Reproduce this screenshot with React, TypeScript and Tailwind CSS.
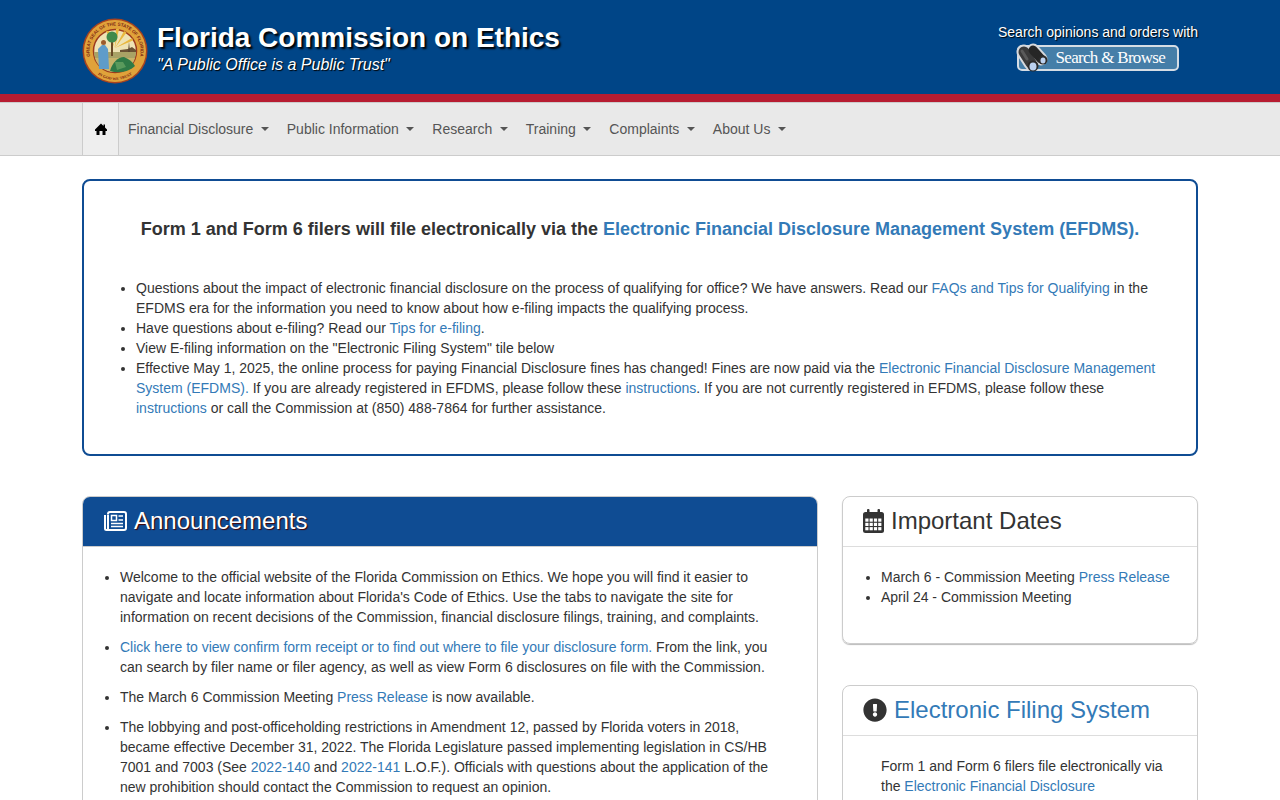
import { FaExclamationCircle } from "react-icons/fa";

const navItems = ["Financial Disclosure", "Public Information", "Research", "Training", "Complaints", "About Us"];

const Seal = () => (
  <svg width="66" height="66" viewBox="0 0 66 66" className="shrink-0">
    <defs>
      <path id="seal-top" d="M13 48.800A25.500 25.500 0 1 1 53 48.800" />
      <path id="seal-bottom" d="M16 56.500A29 29 0 0 0 50 56.500" />
    </defs>
    <circle cx="33" cy="33" r="32.500" fill="#a8431f" />
    <circle cx="33" cy="33" r="31" fill="#e0a23a" />
    <circle cx="33" cy="33" r="21.500" fill="#efe3b4" stroke="#9c3a1e" strokeWidth="1.500" />
    <path d="M33 30 24 13h3zM33 30 34 11h3zM33 30 42 13l2.500 1.500zM33 30 50 20l1 2.500z" fill="#e9b83f" />
    <path d="M12 34h42a21 21 0 0 1-1 6H13a21 21 0 0 1-1-6z" fill="#a9a265" />
    <path d="M13 40h40c-2 8-10 14-20 14s-18-6-20-14z" fill="#c9b46a" />
    <path d="M28 53c2-8 8-14 14-14 5 2 9 5 11 9-5 5-15 8-25 5z" fill="#2f7a46" />
    <path d="M33 44h8l3 5-9 3z" fill="#5a9a5c" />
    <path d="M16 31l4-4h3l3 4 1 20h-10z" fill="#5f9cc9" />
    <circle cx="21.500" cy="24.500" r="2.500" fill="#9c5b2b" />
    <rect x="29" y="20" width="2" height="18" fill="#6a4a25" />
    <circle cx="30" cy="19" r="5.500" fill="#3f8a4b" />
    <path d="M38 34h16v-2l-4-3-4 2-8 1z" fill="#6a5234" />
    <path d="M47 24l1 10h-2z" fill="#5a4630" />
    <text fontFamily="Liberation Sans, sans-serif" fontSize="4.500" fontWeight="700" fill="#7c2412">
      <textPath href="#seal-top" startOffset="50%" textAnchor="middle">
        GREAT SEAL OF THE STATE OF FLORIDA
      </textPath>
    </text>
    <text fontFamily="Liberation Serif, serif" fontSize="4" fontWeight="700" fill="#7c2412">
      <textPath href="#seal-bottom" startOffset="50%" textAnchor="middle">
        IN GOD WE TRUST
      </textPath>
    </text>
  </svg>
);

const Binoculars = () => (
  <svg width="34" height="32" viewBox="0 0 34 32" className="absolute -left-[3px] -top-[5px]">
    <g fill="none" strokeLinecap="round">
      <path d="M8 10 15 21" stroke="#d6d9dd" strokeWidth="15" />
      <path d="M17 8 25 17" stroke="#d6d9dd" strokeWidth="13" />
      <path d="M8 10 15 21" stroke="#3a3a3a" strokeWidth="11" />
      <path d="M17 8 25 17" stroke="#262626" strokeWidth="9" />
      <path d="M6 9 11 17" stroke="#5a5a5a" strokeWidth="3" />
    </g>
    <circle cx="17" cy="24" r="5.500" fill="#2b2b2b" />
    <ellipse cx="17" cy="24.500" rx="3.500" ry="4" fill="#bcd2f0" />
    <circle cx="27" cy="18" r="4.500" fill="#2b2b2b" />
    <ellipse cx="27" cy="18.500" rx="2.500" ry="3" fill="#bcd2f0" />
  </svg>
);

const HomeIcon = () => (
  <svg width="12" height="12" viewBox="0 0 12 12" fill="#000">
    <path d="M6 .5 8.500 3V1.500H10V4.500L12 6.500V8H10.500V12H7.500V8H4.500V12H1.500V8H0V6.500z" />
  </svg>
);

const NewspaperIcon = () => (
  <svg width="24" height="20" viewBox="0 0 24 20" fill="none" stroke="#fff" strokeWidth="2" className="shrink-0">
    <path d="M5 3.500V17.500a1.500 1.500 0 0 1-3 0V4M5 3a2 2 0 0 1 2-2h14a2 2 0 0 1 2 2v14a2 2 0 0 1-2 2H3.500" />
    <rect x="8.500" y="4.500" width="5" height="5" strokeWidth="1.500" />
    <path d="M15.500 5H20M15.500 9H20M8 12.500H20M8 15.500H20" strokeWidth="1.500" />
  </svg>
);

const CalendarIcon = () => (
  <svg width="21" height="24" viewBox="0 0 21 24" className="shrink-0">
    <rect x="0" y="3" width="21" height="21" rx="2.500" fill="#333" />
    <rect x="4" y="0" width="2.500" height="5" rx="1" fill="#333" />
    <rect x="14.500" y="0" width="2.500" height="5" rx="1" fill="#333" />
    {[0, 1, 2, 3].map((col) =>
      [0, 1, 2].map((row) => (
        <rect key={`${col}-${row}`} x={2.300 + col * 4.300} y={9.500 + row * 4.300} width="3.200" height="3.200" fill="#fff" />
      )),
    )}
  </svg>
);

const A = ({ children }: { children: React.ReactNode }) => (
  <a href="#" className="text-[#337ab7]">
    {children}
  </a>
);

export default function App() {
  return (
    <div className="h-screen overflow-hidden bg-white font-['Liberation_Sans',Arial,sans-serif] text-[14px] leading-[20px] text-[#333]">
      <header className="flex h-[94px] items-start justify-between bg-[#004587] px-[82px] pt-[18px] text-white">
        <div className="flex gap-[9px]">
          <Seal />
          <div>
            <h1 className="mt-[2px] text-[28px] font-bold leading-[36px] [text-shadow:2px_2px_2px_#000]">
              Florida Commission on Ethics
            </h1>
            <p className="-mt-[1px] text-[16px] italic leading-[20px] [text-shadow:1px_1px_1px_#000]">
              "A Public Office is a Public Trust"
            </p>
          </div>
        </div>
        <div className="flex flex-col items-center pt-[4px]">
          <p className="[text-shadow:1px_1px_1px_#000]">Search opinions and orders with</p>
          <div className="relative mt-[3px] flex h-[26px] w-[162px] items-center justify-end rounded-[5px] border-2 border-[#d5dde5] bg-[#457ea8] pr-[12px] font-['Liberation_Serif',serif] text-[17px] tracking-[-0.7px] text-white">
            <Binoculars />
            Search &amp; Browse
          </div>
        </div>
      </header>
      <div className="h-[8px] bg-[#b71c31]" />
      <nav className="flex h-[54px] border-b border-t border-[#ccc] bg-[#e9e9e9] pl-[82px]">
        <div className="flex w-[37px] items-center justify-center border-x border-[#ccc] bg-[#eee]">
          <HomeIcon />
        </div>
        <ul className="flex items-center text-[#555]">
          {navItems.map((item) => (
            <li key={item} className="flex items-center gap-[7.500px] px-[9px]">
              {item}
              <span className="h-0 w-0 border-x-4 border-t-4 border-x-transparent border-t-[#555]" />
            </li>
          ))}
        </ul>
      </nav>

      <main className="mx-[82px] pt-[23px]">
        <section className="h-[277px] rounded-[8px] border-2 border-[#0f4c93] pl-[12px] pr-[32px] pt-[35px]">
          <h2 className="ml-[20px] text-center text-[18px] font-bold leading-[26px]">
            Form 1 and Form 6 filers will file electronically via the{" "}
            <A>Electronic Financial Disclosure Management System (EFDMS).</A>
          </h2>
          <ul className="mt-[36px] list-disc pl-[40px]">
            <li>
              Questions about the impact of electronic financial disclosure on the process of qualifying for office? We
              have answers. Read our <A>FAQs and Tips for Qualifying</A> in the EFDMS era for the information you need to
              know about how e-filing impacts the qualifying process.
            </li>
            <li>
              Have questions about e-filing? Read our <A>Tips for e-filing</A>.
            </li>
            <li>View E-filing information on the "Electronic Filing System" tile below</li>
            <li>
              Effective May 1, 2025, the online process for paying Financial Disclosure fines has changed! Fines are now
              paid via the <A>Electronic Financial Disclosure Management System (EFDMS).</A> If you are already registered
              in EFDMS, please follow these <A>instructions</A>. If you are not currently registered in EFDMS, please
              follow these <A>instructions</A> or call the Commission at (850) 488-7864 for further assistance.
            </li>
          </ul>
        </section>

        <div className="mt-[40px] grid grid-cols-[736px_356px] gap-x-[24px]">
          <section className="overflow-hidden rounded-t-[8px] border border-[#ccc]">
            <h2 className="flex h-[50px] items-center gap-[7px] border-b border-[#ccc] bg-[#0f4c93] px-[20px] pb-[2px] text-[24px] text-white [text-shadow:1px_1px_1px_#400]">
              <NewspaperIcon />
              Announcements
            </h2>
            <ul className="list-disc py-[20px] pl-[37px] pr-[40px]">
              <li className="mb-[10px]">
                Welcome to the official website of the Florida Commission on Ethics. We hope you will find it easier to
                navigate and locate information about Florida's Code of Ethics. Use the tabs to navigate the site for
                information on recent decisions of the Commission, financial disclosure filings, training, and complaints.
              </li>
              <li className="mb-[2px]">
                <A>Click here to view confirm form receipt or to find out where to file your disclosure form.</A> From the
                link, you can search by filer name or filer agency, as well as view Form 6 disclosures on file with the
                Commission.
              </li>
              <li className="mb-[10px] mt-[10px]">
                The March 6 Commission Meeting <A>Press Release</A> is now available.
              </li>
              <li>
                The lobbying and post-officeholding restrictions in Amendment 12, passed by Florida voters in 2018, became
                effective December 31, 2022. The Florida Legislature passed implementing legislation in CS/HB 7001 and 7003
                (See <A>2022-140</A> and <A>2022-141</A> L.O.F.). Officials with questions about the application of the new
                prohibition should contact the Commission to request an opinion.
              </li>
            </ul>
          </section>

          <div className="flex flex-col gap-[41px]">
            <section className="h-[148px] rounded-[8px] border border-[#ccc] shadow-[0_1px_1px_#bbb]">
              <h2 className="flex h-[50px] items-center gap-[7px] border-b border-[#ddd] px-[20px] pb-[2px] text-[24px]">
                <CalendarIcon />
                Important Dates
              </h2>
              <ul className="list-disc py-[20px] pl-[38px] pr-[20px]">
                <li>
                  March 6 - Commission Meeting <A>Press Release</A>
                </li>
                <li>April 24 - Commission Meeting</li>
              </ul>
            </section>
            <section className="rounded-[8px] border border-[#ccc]">
              <h2 className="flex h-[50px] items-center gap-[7px] border-b border-[#ddd] px-[20px] pb-[2px] text-[24px]">
                <FaExclamationCircle className="shrink-0 text-[24px]" />
                <A>Electronic Filing System</A>
              </h2>
              <p className="pb-[20px] pl-[38px] pr-[30px] pt-[20px]">
                Form 1 and Form 6 filers file electronically via the <A>Electronic Financial Disclosure Management System</A>
              </p>
            </section>
          </div>
        </div>
      </main>
    </div>
  );
}
